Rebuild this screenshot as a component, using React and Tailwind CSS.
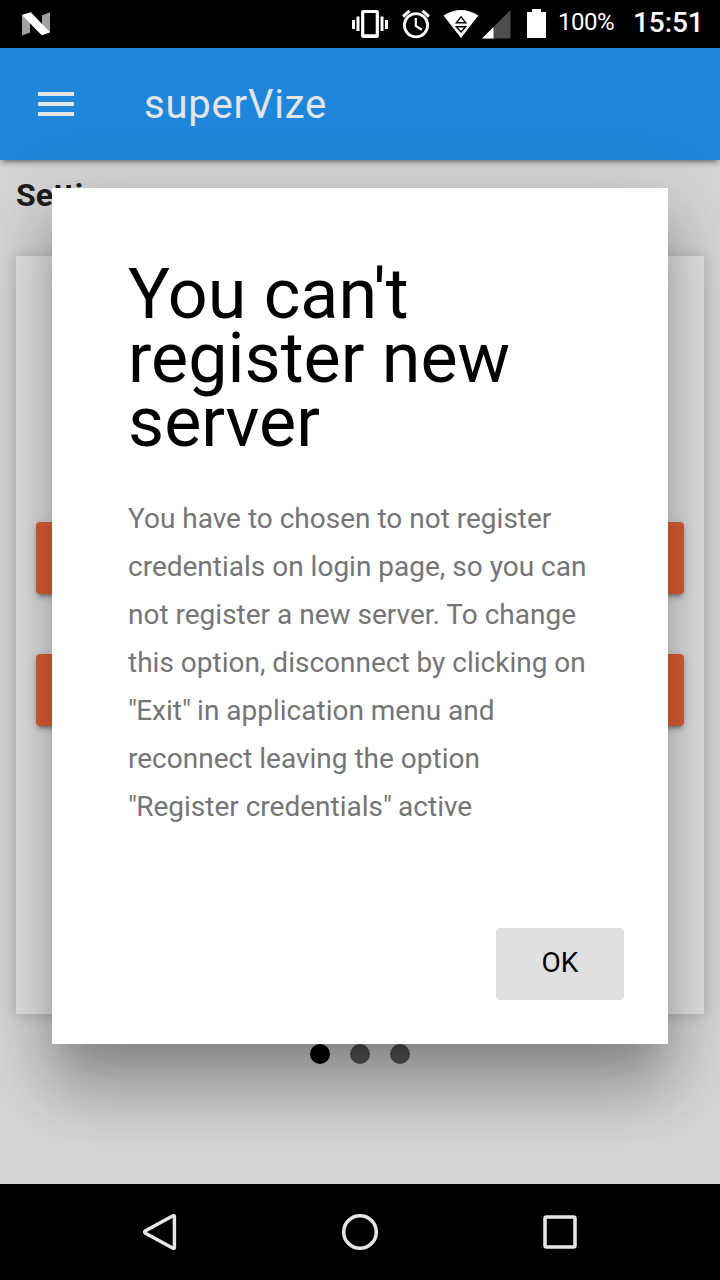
function StatusBar() {
  return (
    <div className="flex h-12 shrink-0 items-start bg-black text-white">
      <svg className="ml-5 h-12 w-8 shrink-0" viewBox="20 0 32 48">
        <path d="M22 15 30 13v19.500l-8 3z" fill="#a0a0a0" />
        <path d="M42 15.300 50 12.300v20l-8 3z" fill="#a0a0a0" />
        <path d="M22 15 30.800 12.200 50 32.300l-8.300 3z" fill="#fff" />
      </svg>
      <svg className="ml-[288px] h-12 w-[210px] shrink-0" viewBox="340 0 210 48">
        <g fill="#fff">
          <path d="M352 20h3v9h-3zM356.500 16.500h3v14.500h-3zM380.500 16.500h3v14.500h-3zM385 20h3v9h-3z" />
          <path fillRule="evenodd" d="M363.300 10h13.400a2.200 2.200 0 0 1 2.200 2.200v23.600a2.200 2.200 0 0 1-2.200 2.200h-13.400a2.200 2.200 0 0 1-2.200-2.200V12.200a2.200 2.200 0 0 1 2.200-2.200zM364.300 13v21.300h11.400V13z" />
        </g>
        <g fill="none" stroke="#fff">
          <circle cx="416" cy="25.200" r="11.600" strokeWidth="2.800" />
          <path d="M403 16.500l6.500-5.600M429 16.500l-6.500-5.600" strokeWidth="3" />
          <path d="M415.800 18v8l6 3.800" strokeWidth="2.200" />
        </g>
        <path d="M443.500 15.500Q461 4.500 478.300 15.500L461 38z" fill="#fff" />
        <path d="M461 16.800l4.700 6h-9.400zM461 32l4.700-5.200h-9.400z" fill="none" stroke="#000" strokeWidth="1.400" />
        <path d="M510.500 10v28.500h-28.500z" fill="#4d4d4d" />
        <path d="M493.500 27v11.500H482z" fill="#fff" />
        <path d="M527 12h5V9h9v3h5v26h-19z" fill="#fff" />
      </svg>
      <span className="ml-2 mt-[6px] w-[75px] whitespace-nowrap text-[24px] leading-8 tracking-[-0.5px]">100%</span>
      <span className="mt-[7px] whitespace-nowrap text-[28px] font-medium leading-8 tracking-[-0.1px]">15:51</span>
    </div>
  );
}

function Header() {
  return (
    <header className="relative z-10 flex h-28 shrink-0 items-center bg-[#2397f4] pl-[38px] shadow-[0_4px_4px_0_rgba(0,0,0,0.14),0_6px_2px_-4px_rgba(0,0,0,0.2),0_2px_10px_0_rgba(0,0,0,0.12)]">
      <div className="flex w-9 flex-col gap-[6px]">
        <span className="h-1 bg-white" />
        <span className="h-1 bg-white" />
        <span className="h-1 bg-white" />
      </div>
      <span className="ml-[70px] pt-[2px] text-[40px] leading-none tracking-[0.8px] text-white">superVize</span>
    </header>
  );
}

const actionClass =
  "h-[72px] rounded bg-[#ff6e40] shadow-[0_4px_4px_0_rgba(0,0,0,0.14),0_6px_2px_-4px_rgba(0,0,0,0.2),0_2px_10px_0_rgba(0,0,0,0.12)]";

function SettingsPage() {
  return (
    <main className="flex flex-1 flex-col px-4 pt-[15px]">
      <h2 className="text-[32px] font-bold leading-[40px] text-[#212121]">Settings</h2>
      <section className="mt-[41px] flex h-[758px] flex-col gap-[60px] bg-white px-5 pt-[266px] shadow-[0_1px_14px_0_rgba(0,0,0,0.18)]">
        <div className={actionClass} />
        <div className={actionClass} />
      </section>
      <div className="mt-[30px] flex justify-center gap-5">
        <span className="size-5 rounded-full bg-black" />
        <span className="size-5 rounded-full bg-black/60" />
        <span className="size-5 rounded-full bg-black/60" />
      </div>
    </main>
  );
}

function Quote() {
  return <span className="tracking-[-0.8px]">"</span>;
}

function Dialog() {
  return (
    <div className="absolute inset-0 z-20 bg-black/10 px-[52px] pt-[140px]">
      <div className="flex h-[856px] flex-col bg-white pl-[76px] pr-11 pt-[74px] shadow-[0_18px_72px_10px_rgba(0,0,0,0.14),0_22px_30px_-14px_rgba(0,0,0,0.12),0_48px_60px_4px_rgba(0,0,0,0.22)]">
        <h1 className="w-[460px] text-[70px] leading-[64px] text-black">You can't register new server</h1>
        <p className="mt-[41px] whitespace-nowrap text-[28px] leading-[48px] text-[#757575]">
          You have to chosen to not register<br />
          credentials on login page, so you can<br />
          not register a new server. To change<br />
          this option, disconnect by clicking on<br />
          <Quote />Exit<Quote /> in application menu and<br />
          reconnect leaving the option<br />
          <Quote />Register credentials<Quote /> active
        </p>
        <button className="mt-auto mb-11 flex h-[72px] w-32 items-center justify-center self-end rounded bg-[#e0e0e0] pb-[2px] text-[28px] leading-none text-black">
          OK
        </button>
      </div>
    </div>
  );
}

function NavigationBar() {
  return (
    <nav className="flex h-24 shrink-0 items-center justify-between bg-black px-[136px]">
      <svg className="size-12" viewBox="0 0 48 48" fill="none" stroke="#e6e6e6" strokeWidth="3.500" strokeLinejoin="round">
        <path d="M37 7.800Q38.400 7.200 38.400 8.800V39.200Q38.400 40.800 37 40.200L9.500 25.200Q7.800 24 9.500 22.800Z" />
      </svg>
      <svg className="size-12" viewBox="0 0 48 48" fill="none" stroke="#e6e6e6" strokeWidth="3.500">
        <circle cx="24" cy="24" r="16.300" />
      </svg>
      <svg className="size-12" viewBox="0 0 48 48" fill="none" stroke="#e6e6e6" strokeWidth="3.500">
        <rect x="9" y="9" width="30" height="30" rx="1.500" />
      </svg>
    </nav>
  );
}

export default function App() {
  return (
    <div className="flex h-[1280px] w-[720px] flex-col overflow-hidden bg-black font-['Roboto',sans-serif]">
      <StatusBar />
      <div className="relative flex flex-1 flex-col overflow-hidden bg-[#efefef]">
        <Header />
        <SettingsPage />
        <Dialog />
      </div>
      <NavigationBar />
    </div>
  );
}
